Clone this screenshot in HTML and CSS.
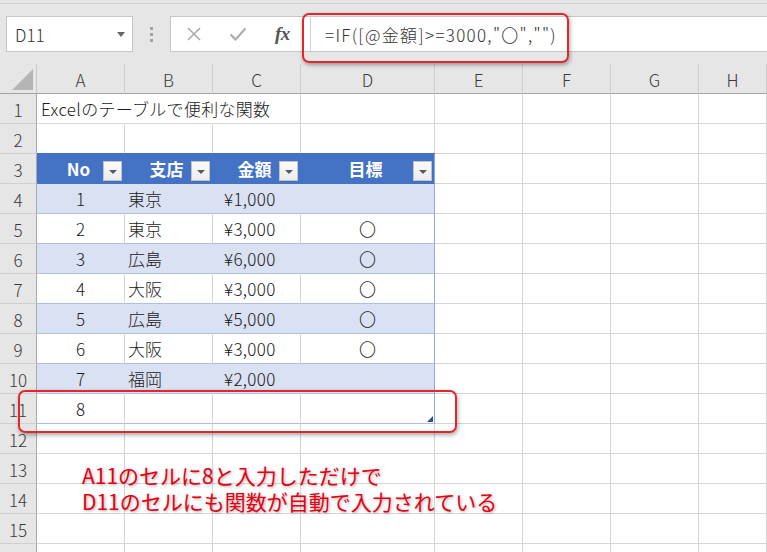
FILE: index.html
```html
<!DOCTYPE html>
<html lang="ja">
<head>
<meta charset="utf-8">
<title>Excel テーブル</title>
<link rel="stylesheet" href="styles.css">
</head>
<body>
<div class="app">
  <div class="toolbar">
    <div class="toolbar-inner">
      <div class="namebox"><span>D11</span><svg class="nb-arrow" width="8" height="5" viewBox="0 0 8 5"><path d="M0 0H8L4 5Z" fill="#666"/></svg></div>
      <div class="grip"><i></i><i></i><i></i></div>
      <div class="fbar">
        <div class="fbtns">
          <svg class="ic" width="16" height="16" viewBox="0 0 16 16"><path d="M2 2L14 14M14 2L2 14" stroke="#ababab" stroke-width="1.6" fill="none"/></svg>
          <svg class="ic" width="18" height="16" viewBox="0 0 18 16"><path d="M1.5 8.5L6.5 13.5L16.5 2.5" stroke="#ababab" stroke-width="2.2" fill="none"/></svg>
          <span class="fx">fx</span>
        </div>
        <div class="ftext">=IF([@金額]&gt;=3000,"〇","")</div>
      </div>
    </div>
  </div>

  <div class="sheet">
    <div class="row hdr"><div class="corner"><span></span></div><div class="ch">A</div><div class="ch">B</div><div class="ch">C</div><div class="ch">D</div><div class="ch">E</div><div class="ch">F</div><div class="ch">G</div><div class="ch">H</div></div>

    <div class="row"><div class="rh">1</div><div class="c nob title">Excelのテーブルで便利な関数</div><div class="c nob"></div><div class="c"></div><div class="c"></div><div class="c"></div><div class="c"></div><div class="c"></div><div class="c"></div></div>
    <div class="row"><div class="rh">2</div><div class="c"></div><div class="c"></div><div class="c"></div><div class="c"></div><div class="c"></div><div class="c"></div><div class="c"></div><div class="c"></div></div>

    <div class="row"><div class="rh">3</div>
      <div class="c th"><span>No</span><b class="dd"></b></div>
      <div class="c th"><span>支店</span><b class="dd"></b></div>
      <div class="c th"><span>金額</span><b class="dd"></b></div>
      <div class="c th last"><span>目標</span><b class="dd"></b></div>
      <div class="c"></div><div class="c"></div><div class="c"></div><div class="c"></div></div>

    <div class="row"><div class="rh">4</div><div class="c t band ctr">1</div><div class="c t band lft">東京</div><div class="c t band yen">¥1,000</div><div class="c t band last ctr"></div><div class="c"></div><div class="c"></div><div class="c"></div><div class="c"></div></div>
    <div class="row"><div class="rh">5</div><div class="c t ctr">2</div><div class="c t lft">東京</div><div class="c t yen">¥3,000</div><div class="c t last ctr">〇</div><div class="c"></div><div class="c"></div><div class="c"></div><div class="c"></div></div>
    <div class="row"><div class="rh">6</div><div class="c t band ctr">3</div><div class="c t band lft">広島</div><div class="c t band yen">¥6,000</div><div class="c t band last ctr">〇</div><div class="c"></div><div class="c"></div><div class="c"></div><div class="c"></div></div>
    <div class="row"><div class="rh">7</div><div class="c t ctr">4</div><div class="c t lft">大阪</div><div class="c t yen">¥3,000</div><div class="c t last ctr">〇</div><div class="c"></div><div class="c"></div><div class="c"></div><div class="c"></div></div>
    <div class="row"><div class="rh">8</div><div class="c t band ctr">5</div><div class="c t band lft">広島</div><div class="c t band yen">¥5,000</div><div class="c t band last ctr">〇</div><div class="c"></div><div class="c"></div><div class="c"></div><div class="c"></div></div>
    <div class="row"><div class="rh">9</div><div class="c t ctr">6</div><div class="c t lft">大阪</div><div class="c t yen">¥3,000</div><div class="c t last ctr">〇</div><div class="c"></div><div class="c"></div><div class="c"></div><div class="c"></div></div>
    <div class="row"><div class="rh">10</div><div class="c t band ctr">7</div><div class="c t band lft">福岡</div><div class="c t band yen">¥2,000</div><div class="c t band last ctr"></div><div class="c"></div><div class="c"></div><div class="c"></div><div class="c"></div></div>
    <div class="row"><div class="rh">11</div><div class="c t ctr">8</div><div class="c t"></div><div class="c t"></div><div class="c t last"><b class="handle"></b></div><div class="c"></div><div class="c"></div><div class="c"></div><div class="c"></div></div>

    <div class="row"><div class="rh">12</div><div class="c"></div><div class="c"></div><div class="c"></div><div class="c"></div><div class="c"></div><div class="c"></div><div class="c"></div><div class="c"></div></div>
    <div class="row"><div class="rh">13</div><div class="c"></div><div class="c"></div><div class="c"></div><div class="c"></div><div class="c"></div><div class="c"></div><div class="c"></div><div class="c"></div></div>
    <div class="row"><div class="rh">14</div><div class="c"></div><div class="c"></div><div class="c"></div><div class="c"></div><div class="c"></div><div class="c"></div><div class="c"></div><div class="c"></div></div>
    <div class="row"><div class="rh">15</div><div class="c"></div><div class="c"></div><div class="c"></div><div class="c"></div><div class="c"></div><div class="c"></div><div class="c"></div><div class="c"></div></div>
    <div class="row"><div class="rh"></div><div class="c"></div><div class="c"></div><div class="c"></div><div class="c"></div><div class="c"></div><div class="c"></div><div class="c"></div><div class="c"></div></div>
  </div>

  <div class="mark mark-formula"></div>
  <div class="mark mark-row"></div>
  <div class="note"><div class="note-line">A11のセルに8と入力しただけで</div><div class="note-line">D11のセルにも関数が自動で入力されている</div></div>
</div>
</body>
</html>
```

FILE: styles.css
```css
* { box-sizing: border-box; }
html, body { margin: 0; padding: 0; }
body {
  width: 767px;
  height: 552px;
  overflow: hidden;
  background: #fff;
  font-family: "Noto Sans CJK JP", "Noto Sans", sans-serif;
  font-weight: 300;
  color: #1a1a1a;
}
.app { position: relative; width: 767px; height: 552px; overflow: hidden; }

/* ---------- toolbar ---------- */
.toolbar {
  height: 64px;
  background: #e6e6e6;
  padding-top: 3px;
}
.toolbar-inner {
  height: 61px;
  border-top: 1px solid #d3d3d3;
  padding-top: 12px;
  display: flex;
  align-items: flex-start;
}
.namebox {
  margin-left: 6px;
  width: 127px;
  height: 36px;
  background: #fff;
  border: 1px solid #c6c6c6;
  display: flex;
  align-items: center;
  justify-content: space-between;
  padding: 0 7px 0 8px;
  font-size: 17px;
  color: #333;
}
.nb-arrow { margin-top: 1px; }
.grip {
  width: 37px;
  height: 36px;
  display: flex;
  flex-direction: column;
  align-items: center;
  justify-content: center;
  gap: 3px;
}
.grip i { display: block; width: 3px; height: 3px; background: #a3a3a3; }
.fbar {
  flex: 1;
  height: 36px;
  background: #fff;
  border: 1px solid #c6c6c6;
  border-right: none;
  display: flex;
}
.fbtns {
  width: 140px;
  border-right: 1px solid #d0d0d0;
  display: flex;
  align-items: center;
  padding-left: 15px;
  gap: 27px;
}
.ic { display: block; }
.fx {
  font-family: "Liberation Serif", "DejaVu Serif", serif;
  font-style: italic;
  font-weight: bold;
  font-size: 19px;
  color: #555;
  letter-spacing: -0.5px;
  margin-left: 1px;
}
.ftext {
  padding-left: 14px;
  display: flex;
  align-items: center;
  font-size: 17px;
  letter-spacing: 1.3px;
  color: #333;
  white-space: nowrap;
}

/* ---------- sheet ---------- */
.row {
  display: grid;
  grid-template-columns: 37px 88px 88px 88px 134px 88px 88px 88px 1fr;
  height: 30px;
}
.hdr > div { background: #e6e6e6; border-bottom: 1px solid #a3a3a3; }
.corner { border-right: 1px solid #c8c8c8; position: relative; }
.corner span {
  position: absolute;
  left: 12px; top: 5px;
  width: 21px; height: 21px;
  background: #b5b5b5;
  clip-path: polygon(100% 0, 100% 100%, 0 100%);
}
.ch {
  border-right: 1px solid #cdcdcd;
  display: flex;
  align-items: center;
  justify-content: center;
  font-size: 17px;
  color: #3a3a3a;
  padding-top: 1px;
}
.rh {
  background: #e6e6e6;
  border-right: 1px solid #a8a8a8;
  border-bottom: 1px solid #cfcfcf;
  display: flex;
  align-items: center;
  justify-content: center;
  font-size: 17px;
  color: #3a3a3a;
  padding-top: 1px;
}
.c {
  border-right: 1px solid #d6d6d6;
  border-bottom: 1px solid #d6d6d6;
  display: flex;
  align-items: center;
  font-size: 17px;
  white-space: nowrap;
  padding-top: 0;
  position: relative;
}
.nob { border-right-color: transparent; }
.title { padding-left: 4px; overflow: visible; z-index: 1; letter-spacing: 0.3px; }

/* table */
.th {
  background: #4472c4;
  border-right-color: #4472c4;
  border-bottom-color: #4472c4;
  box-shadow: 0 -1px 0 #4472c4;
  color: #fff;
  font-weight: bold;
  justify-content: center;
}
.th span { position: relative; left: -2px; }
.th:first-child + .th span { left: -4px; }
.dd {
  position: absolute;
  right: 2px;
  bottom: 2px;
  width: 19px;
  height: 20px;
  background: linear-gradient(#fbfbfb, #ececec);
  border: 1px solid #c3c3c3;
}
.dd::after {
  content: "";
  position: absolute;
  left: 5px; top: 8px;
  border-left: 4px solid transparent;
  border-right: 4px solid transparent;
  border-top: 4px solid #5a5a5a;
}
.t { border-bottom-color: #aebfe0; }
.band { background: #d9e1f2; border-right-color: #d9e1f2; }
.last { border-right-color: #8ea9db; }
.band.last { border-right-color: #8ea9db; }
.ctr { justify-content: center; }
.lft { padding-left: 3px; }
.yen { padding-left: 11px; letter-spacing: 0.3px; }
.handle {
  position: absolute;
  right: 1px;
  bottom: 1px;
  width: 6px;
  height: 6px;
  background: #34499a;
  clip-path: polygon(100% 0, 100% 100%, 0 100%);
}

/* ---------- annotations ---------- */
.mark {
  position: absolute;
  border: 2px solid #e2262c;
  border-radius: 7px;
  box-shadow: 1px 2px 4px rgba(0,0,0,0.35);
}
.mark-formula { left: 302px; top: 13px; width: 267px; height: 50px; }
.mark-row { left: 18px; top: 390px; width: 439px; height: 43px; }
.note {
  position: absolute;
  left: 82px;
  top: 462px;
  font-size: 21px;
  font-weight: 400;
  color: #e60012;
  white-space: nowrap;
  text-shadow: 1px 1px 3px rgba(0,0,0,0.35);
}
.note-line { height: 26px; line-height: 26px; }
```
